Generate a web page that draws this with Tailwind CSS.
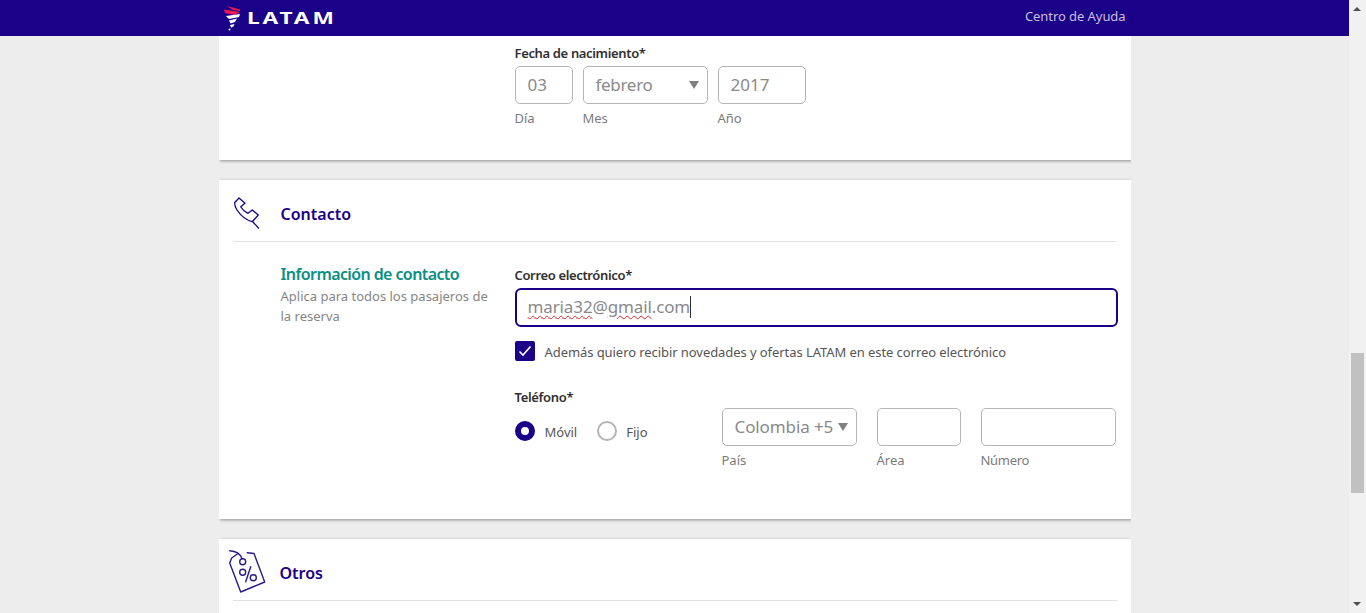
<!DOCTYPE html>
<html lang="es">
<head>
  <meta charset="UTF-8">
  <title>LATAM | Datos de pasajeros</title>
  <script src="https://cdn.jsdelivr.net/npm/@tailwindcss/browser@4"></script>
</head>
<body class="h-screen overflow-hidden bg-[#ededed] font-['Noto_Sans',sans-serif] text-[#303030]">
  <div class="flex h-full">
    <div class="flex min-w-0 flex-1 flex-col">
      <!-- header -->
      <header class="z-10 h-9 shrink-0 bg-[#1b0088]">
        <div class="mx-auto flex h-full w-[912px] items-start justify-between pl-[5px] pr-[5px]">
          <div class="flex items-start gap-[6px] pt-[6px]">
            <svg width="17" height="26" viewBox="0 0 17 26">
              <path d="M3 0 L16 3.500 L16 5 L9 4 Z" fill="#ed1650"/>
              <path d="M0 3.500 L16 6 L10 9 L1 7 Z" fill="#ed1650"/>
              <path d="M2 10 L16 8 L15 11 L5 13 Z" fill="#ffffff"/>
              <path d="M5 14.500 L13 12.500 L11 16 L6.500 17.500 Z" fill="#ffffff"/>
              <path d="M6 19 L10.500 18 L9.500 20.500 L7 21.500 Z" fill="#ffffff"/>
              <circle cx="5.500" cy="23.500" r="1" fill="#ffffff"/>
            </svg>
            <span class="origin-left scale-x-[1.42] text-[16px] leading-[24px] font-bold tracking-[2px] text-white">LATAM</span>
          </div>
          <a class="pt-[7px] text-[13px] leading-[18px] tracking-[-0.07px] text-[#c9bfdc]">Centro de Ayuda</a>
        </div>
      </header>

      <main class="mx-auto flex w-[912px] flex-col gap-5 overflow-hidden">
        <!-- datos personales, final de la tarjeta -->
        <section class="h-[124px] shrink-0 bg-white pt-[8px] pl-[296px] shadow-[1px_1px_3px_rgba(0,0,0,0.4)]">
          <p class="text-[13px] leading-[18px] font-semibold tracking-[-0.35px]">Fecha de nacimiento*</p>
          <div class="mt-[4px] flex gap-[10px]">
            <div class="w-[58px]">
              <div class="flex h-[38px] items-center rounded-[5px] border border-[#b5b5b5] pl-[12px] text-[17px] text-[#8a8a8a]">03</div>
              <p class="mt-[5px] text-[13px] leading-[18px] text-[#7b7b7b]">Día</p>
            </div>
            <div class="w-[125px]">
              <div class="flex h-[38px] items-center justify-between rounded-[5px] border border-[#b5b5b5] pr-[8px] pl-[12px] text-[17px] tracking-[-0.3px] text-[#8a8a8a]">febrero<span class="h-0 w-0 border-x-[5px] border-t-[8px] border-x-transparent border-t-[#808080]"></span></div>
              <p class="mt-[5px] text-[13px] leading-[18px] text-[#7b7b7b]">Mes</p>
            </div>
            <div class="w-[88px]">
              <div class="flex h-[38px] items-center rounded-[5px] border border-[#b5b5b5] pl-[12px] text-[17px] text-[#8a8a8a]">2017</div>
              <p class="mt-[5px] text-[13px] leading-[18px] text-[#7b7b7b]">Año</p>
            </div>
          </div>
        </section>

        <!-- contacto -->
        <section class="h-[339px] shrink-0 bg-white px-[14px] shadow-[1px_1px_3px_rgba(0,0,0,0.4)]">
          <div class="flex h-[62px] items-center border-b border-[#e2e2e2] pt-[6px]">
            <svg class="mt-[10px] w-[27px] shrink-0 self-start" width="27" height="33" viewBox="0 0 27 33" fill="none" stroke="#1b0088" stroke-width="1.300" stroke-linejoin="round" stroke-linecap="round">
              <path d="M6 2 L1.700 6.500 C1.500 9 2 11 4 14 C8 20 13 24 19.300 25.700 L25.300 19 L19.300 14 L15 17.300 C12 16 9 13 7.700 10.700 L12 7.300 Z"/>
              <path d="M20 26 L25.500 32"/>
            </svg>
            <h2 class="ml-[21px] text-[16px] font-semibold text-[#1b0088]">Contacto</h2>
          </div>
          <div class="flex">
            <div class="w-[282px] shrink-0 pt-[21px] pl-[48px]">
              <h3 class="text-[16px] leading-[22px] font-semibold tracking-[-0.6px] text-[#0a8f83]">Información de contacto</h3>
              <p class="mt-[1px] w-[215px] text-[13px] leading-[20px] text-[#858585]">Aplica para todos los pasajeros de la reserva</p>
            </div>
            <div class="flex-1 pt-[24px]">
              <p class="text-[13px] leading-[18px] font-semibold tracking-[-0.35px]">Correo electrónico*</p>
              <div class="mt-[4px] -mr-px flex h-[39px] items-center rounded-[6px] border-2 border-[#1b0088] pb-[2px] pl-[11px] text-[17px] tracking-[-0.12px] text-[#8a8a8a]">
                <span class="underline decoration-wavy decoration-[#e0202c] decoration-1 underline-offset-2">maria32</span>@<span class="underline decoration-wavy decoration-[#e0202c] decoration-1 underline-offset-2">gmail</span>.com<span class="h-[22px] w-px bg-[#303030]"></span>
              </div>
              <div class="mt-[14px] flex items-start gap-[10px]">
                <span class="flex h-5 w-5 items-center justify-center rounded-[2px] bg-[#1b0088]">
                  <svg width="14" height="12" viewBox="0 0 14 12" fill="none" stroke="#ffffff" stroke-width="1.600"><path d="M1.500 6.500 L5 10 L12.500 1.500"/></svg>
                </span>
                <span class="pt-px text-[13px] leading-[20px] tracking-[-0.07px] text-[#555555]">Además quiero recibir novedades y ofertas LATAM en este correo electrónico</span>
              </div>
              <p class="mt-[26px] text-[13px] leading-[18px] font-semibold tracking-[-0.33px]">Teléfono*</p>
              <div class="flex">
                <div class="flex w-[207px] items-start pt-[15px]">
                  <span class="h-5 w-5 rounded-full border-[6.5px] border-[#1b0088]"></span>
                  <span class="ml-[10px] pt-px text-[13px] leading-[21px] text-[#555555]">Móvil</span>
                  <span class="ml-[20px] h-5 w-5 rounded-full border-2 border-[#b5b5b5]"></span>
                  <span class="ml-[9px] pt-px text-[13px] leading-[21px] text-[#555555]">Fijo</span>
                </div>
                <div class="flex gap-[20px] pt-[2px]">
                  <div class="w-[135px]">
                    <div class="flex h-[38px] items-center justify-between rounded-[5px] border border-[#b5b5b5] pr-[8px] pl-[12px] text-[17px] tracking-[-0.1px] text-[#8a8a8a]">Colombia +5<span class="h-0 w-0 border-x-[5px] border-t-[8px] border-x-transparent border-t-[#808080]"></span></div>
                    <p class="mt-[5px] text-[13px] leading-[18px] text-[#7b7b7b]">País</p>
                  </div>
                  <div class="w-[84px]">
                    <div class="h-[38px] rounded-[5px] border border-[#b5b5b5]"></div>
                    <p class="mt-[5px] text-[13px] leading-[18px] text-[#7b7b7b]">Área</p>
                  </div>
                  <div class="w-[135px]">
                    <div class="h-[38px] rounded-[5px] border border-[#b5b5b5]"></div>
                    <p class="mt-[5px] text-[13px] leading-[18px] tracking-[-0.3px] text-[#7b7b7b]">Número</p>
                  </div>
                </div>
              </div>
            </div>
          </div>
        </section>

        <!-- otros -->
        <section class="h-[100px] shrink-0 bg-white px-[14px] shadow-[1px_1px_3px_rgba(0,0,0,0.4)]">
          <div class="flex h-[62px] items-center border-b border-[#e2e2e2] pt-[6px]">
            <svg class="ml-[-5px] mt-[4px] w-[38px] shrink-0 self-start" width="38" height="44" viewBox="0 0 38 44" fill="none" stroke="#2a1a8c" stroke-width="1.400" stroke-linejoin="round" stroke-linecap="round">
              <path d="M9.300 5 L3.700 9 L1.700 14 L12.700 43 L36.700 33 L26 4.500 L19.300 3.700"/>
              <circle cx="14.700" cy="12.700" r="3"/>
              <path d="M1.700 1.700 C7 2 12 4 14 9.500"/>
              <circle cx="14.700" cy="23.300" r="3"/>
              <circle cx="25.300" cy="28.700" r="3"/>
              <path d="M22.700 17.700 L17.700 32.700"/>
            </svg>
            <h2 class="ml-[14px] text-[16px] font-semibold text-[#1b0088]">Otros</h2>
          </div>
        </section>
      </main>
    </div>

    <!-- scrollbar -->
    <div class="relative w-[17px] shrink-0 bg-[#f1f1f1]">
      <span class="absolute top-[7px] left-[4px] h-0 w-0 border-x-[4px] border-b-[4px] border-x-transparent border-b-[#505050]"></span>
      <div class="absolute top-[353px] left-[2px] h-[140px] w-[13px] bg-[#c1c1c1]"></div>
      <span class="absolute bottom-[7px] left-[4px] h-0 w-0 border-x-[4px] border-t-[4px] border-x-transparent border-t-[#505050]"></span>
    </div>
  </div>
</body>
</html>
